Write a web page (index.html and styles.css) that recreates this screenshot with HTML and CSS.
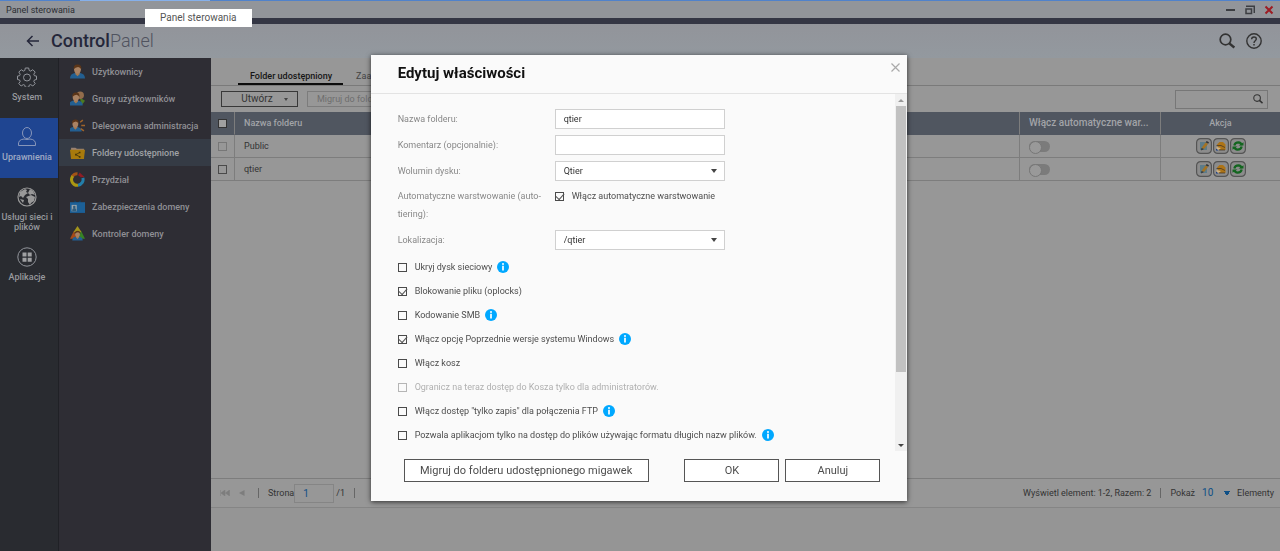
FILE: index.html
```html
<!DOCTYPE html>
<html lang="pl">
<head>
<meta charset="utf-8">
<title>Panel sterowania</title>
<link rel="stylesheet" href="styles.css">
</head>
<body>
<svg class="defs" aria-hidden="true">
  <symbol id="magnifier" viewBox="0 0 16 16"><circle cx="6.500" cy="6.500" r="5.300" fill="none" stroke="currentColor" stroke-width="1.700"/><path d="M10.300 10.300l5 4.300" stroke="currentColor" stroke-width="2.400"/></symbol>
  <symbol id="info" viewBox="0 0 12 12"><circle cx="6" cy="6" r="6" fill="#00a8ff"/><circle cx="6" cy="3" r="1" fill="#fff"/><path d="M6 4.800v4.700" stroke="#fff" stroke-width="1.700"/></symbol>
  <symbol id="person" viewBox="0 0 14 14"><path d="M0 13.500q0-4 4.500-5h5q4.500 1 4.500 5z" fill="#235f91"/><path d="M5 7h4v2.500l-2 2-2-2z" fill="#a47952"/><ellipse cx="7" cy="5" rx="3.200" ry="4" fill="#a98263"/><path d="M3.400 5Q3 .6 7 .5t3.600 4.500Q9.500 3 7.500 2.700 5 3 3.400 5z" fill="#5b3518"/></symbol>
  <symbol id="act-edit" viewBox="0 0 16 16"><rect x=".6" y=".6" width="14.800" height="14.800" rx="4" fill="#8c8c8c" stroke="#555" stroke-width="1.200"/><path d="M4 4h7v8H4z" fill="#5d7c89"/><path d="M5.500 10l4-5.500 2.500 1.500-4 5z" fill="#a47324"/><path d="M5.500 10l2.500 1-3 1.500zM9.700 4.200l1-1.200 2.300 1.300-.8 1.500z" fill="#333"/></symbol>
  <symbol id="act-perm" viewBox="0 0 16 16"><rect x=".6" y=".6" width="14.800" height="14.800" rx="4" fill="#8c8c8c" stroke="#555" stroke-width="1.200"/><path d="M4 6.500l2.500-2.500H10l2.500 2.500V12H6z" fill="#ad7417"/><path d="M3.500 7.500H8l4 2M6 12h6" stroke="#473826" stroke-width=".8" fill="none"/><path d="M3.500 9L8 10l-2 1.500H3.500z" fill="#d0b486"/><path d="M3 10.500l2.500 2H3z" fill="#193d85"/></symbol>
  <symbol id="act-sync" viewBox="0 0 16 16"><rect x=".6" y=".6" width="14.800" height="14.800" rx="4" fill="#8c8c8c" stroke="#555" stroke-width="1.200"/><path d="M4.300 7.500Q5 4.300 8.500 4.300q2.500.2 3.200 3M11.700 8.500Q11 11.700 7.500 11.700 5 11.500 4.300 9" fill="none" stroke="#13651f" stroke-width="2.200"/><path d="M8.500 7.500h5V4.200zM7.500 8.500h-5v3.300z" fill="#13651f"/></symbol>
</svg>
<div class="desktop">
  <header class="titlebar">
    <span>Panel sterowania</span>
    <div class="window-buttons">
      <button aria-label="Minimalizuj"><svg width="10" height="10"><path d="M0 5h9" stroke="#3c3e42" stroke-width="2"/></svg></button>
      <button aria-label="Przywróć"><svg width="10" height="10"><path d="M1 1.200h8.300V8" fill="none" stroke="#3c3e42" stroke-width="1.500"/><path d="M1 4h5.500v4.500H1z" fill="none" stroke="#3c3e42" stroke-width="1.500"/></svg></button>
      <button aria-label="Zamknij okno"><svg width="10" height="10"><path d="M1.500 1.500l7 7m0-7l-7 7" stroke="#9d1c23" stroke-width="2"/></svg></button>
    </div>
    <div class="tooltip" role="tooltip">Panel sterowania</div>
  </header>
  <div class="brandbar">
    <button class="back" aria-label="Wstecz"><svg width="14" height="12"><path d="M13 6H1.500M6.500 1l-5 5 5 5" fill="none" stroke="#25273a" stroke-width="1.500"/></svg></button>
    <h1><b>Control</b>Panel</h1>
    <button class="top-icon" aria-label="Szukaj"><svg width="16" height="16"><use href="#magnifier"/></svg></button>
    <button class="top-icon" aria-label="Pomoc"><svg width="16" height="16"><circle cx="8" cy="8" r="7.200" fill="none" stroke="#333" stroke-width="1.400"/><path d="M5.600 6.300Q5.700 4 8 4t2.300 2.100C10.300 7.800 8 7.800 8 10" fill="none" stroke="#333" stroke-width="1.400"/><path d="M8 11v1.600" stroke="#333" stroke-width="1.500"/></svg></button>
  </div>
  <div class="workspace">
    <nav class="rail" aria-label="Kategorie">
      <a href="#"><svg viewBox="0 0 20 20"><path d="M8.300 1h3.400l.5 2.500 1.500.6 2.100-1.400 2.400 2.400-1.400 2.100.6 1.500 2.100.4v3.400l-2.100.5-.6 1.500 1.400 2.100-2.400 2.400-2.100-1.400-1.500.6-.5 2.100H8.300l-.5-2.100-1.500-.6L4.200 19l-2.400-2.400 1.400-2.100-.6-1.500-2.100-.5V9.100l2.100-.4.600-1.500-1.400-2.100 2.400-2.400 2.100 1.400 1.500-.6z" fill="none" stroke="#92959b"/><circle cx="10" cy="10.500" r="3.500" fill="none" stroke="#92959b"/></svg>System</a>
      <a href="#" class="current"><svg viewBox="0 0 20 20"><ellipse cx="10" cy="6" rx="4.500" ry="5.500" fill="none" stroke="#8796ba"/><path d="M1.500 18.500q-.8-6 5.500-6.500 3 1 6 0 6.300.5 5.500 6.500z" fill="none" stroke="#8796ba"/></svg>Uprawnienia</a>
      <a href="#"><svg viewBox="0 0 20 20"><circle cx="10" cy="10" r="9" fill="none" stroke="#999" stroke-width="1.200"/><path d="M3 5l5-3 2 1-1 2 2 1-3 2-2 3-2-2-2 1zM13 2l3 2 2 4-3-1-2 1-2-2zM9 10l5-2 4 2-1 4-3 2-1 2-2-3v-3zM3 12l4 1-1 3z" fill="#999"/></svg>Usługi sieci i plików</a>
      <a href="#"><svg viewBox="0 0 20 20"><circle cx="10" cy="10" r="9.200" fill="none" stroke="#92959b"/><path d="M5.500 5.500h4v4h-4zm5.200 0h4v4h-4zm-5.200 5.200h4v4h-4zm5.200 0h4v4h-4z" fill="#a0a1a3"/></svg>Aplikacje</a>
    </nav>
    <nav class="submenu" aria-label="Uprawnienia">
      <a href="#"><svg viewBox="0 0 14 14"><use href="#person"/></svg>Użytkownicy</a>
      <a href="#"><svg viewBox="0 0 14 14"><path d="M9 6l5 3-3 4z" fill="#4b7b22"/><circle cx="9.500" cy="4" r="3.500" fill="#926c4b"/><use href="#person" x="-1" y="1" width="13" height="13"/></svg>Grupy użytkowników</a>
      <a href="#"><svg viewBox="0 0 14 14"><use href="#person" x="-1" y="1" width="12" height="12"/><path d="M9.500 4l2.500-2m-1.500 5H14m-4 3l3 2" stroke="#a0642a" stroke-width="1.400"/></svg>Delegowana administracja</a>
      <a href="#" class="current"><svg viewBox="0 0 14 14"><path d="M1 2.500h4l1.500 1H13v3H1z" fill="#998274"/><path d="M0 4.500h14L13 13H1z" fill="#a87a0c"/><path d="M9 7L5.500 9 9 11" fill="none" stroke="#493909" stroke-width=".8"/><path d="M8.300 6.200h1.500v1.500H8.300zM4.700 8.200h1.500v1.500H4.700zM8.300 10.300h1.500v1.500H8.300z" fill="#493909"/></svg>Foldery udostępnione</a>
      <a href="#"><svg viewBox="0 0 14 14"><path d="M2 4.500A5.300 5.300 0 0 1 7 1.700" fill="none" stroke="#a35416" stroke-width="2.800"/><path d="M2.600 3.800A5.300 5.300 0 0 0 7.500 12.300" fill="none" stroke="#aa9712" stroke-width="2.800"/><path d="M7.500 12.300A5.300 5.300 0 0 0 12 5.500" fill="none" stroke="#237eaa" stroke-width="2.800"/><path d="M9 .5l4.500 4.200L10 5 7.500 3z" fill="#8e1c25"/></svg>Przydział</a>
      <a href="#"><svg viewBox="0 0 14 14"><path d="M4 1l3 2.500L10 1v4H4z" fill="#153e5d"/><path d="M0 3h14v10H0z" fill="#1c6097"/><path d="M1.500 5.500h4.800v6H1.500z" fill="#9aa4aa"/><circle cx="4" cy="7.500" r="1.200" fill="#315e7d"/><path d="M2 11.500q0-3 2-3t2 3z" fill="#315e7d"/></svg>Zabezpieczenia domeny</a>
      <a href="#"><svg viewBox="0 0 14 14"><path d="M7 0l4 6H3z" fill="#a3941c"/><path d="M3.500 5L7 12H0z" fill="#a44a18"/><path d="M10.500 5l3.500 7H7z" fill="#378325"/><use href="#person" x="2" y="4" width="10" height="10"/></svg>Kontroler domeny</a>
    </nav>
    <main class="content">
      <div class="tabs" role="tablist">
        <button role="tab" class="selected" aria-selected="true">Folder udostępniony</button>
        <button role="tab" aria-selected="false">Zaaw.</button>
      </div>
      <div class="toolbar">
        <button class="create">Utwórz <i class="caret"></i></button>
        <button class="migrate" disabled>Migruj do folderu</button>
        <label class="search"><input type="search" aria-label="Szukaj folderu"><svg width="10" height="10"><use href="#magnifier"/></svg></label>
      </div>
      <table class="folders">
        <thead>
          <tr><th class="pick"><input type="checkbox" class="head-box" aria-label="Zaznacz wszystkie"></th><th>Nazwa folderu</th><th class="tier">Włącz automatyczne war...</th><th class="action">Akcja</th></tr>
        </thead>
        <tbody>
          <tr><td class="pick"><input type="checkbox" class="box" disabled aria-label="Public"></td><td>Public</td><td class="tier"><input type="checkbox" class="switch" aria-label="Warstwowanie Public"></td><td class="action"><div><button aria-label="Edytuj"><svg><use href="#act-edit"/></svg></button><button aria-label="Uprawnienia"><svg><use href="#act-perm"/></svg></button><button aria-label="Odśwież"><svg><use href="#act-sync"/></svg></button></div></td></tr>
          <tr><td class="pick"><input type="checkbox" class="box" aria-label="qtier"></td><td>qtier</td><td class="tier"><input type="checkbox" class="switch" aria-label="Warstwowanie qtier"></td><td class="action"><div><button aria-label="Edytuj"><svg><use href="#act-edit"/></svg></button><button aria-label="Uprawnienia"><svg><use href="#act-perm"/></svg></button><button aria-label="Odśwież"><svg><use href="#act-sync"/></svg></button></div></td></tr>
        </tbody>
      </table>
      <footer class="pager">
        <button aria-label="Pierwsza strona" disabled><svg width="10" height="6"><path d="M.5 0v6M5 0v6L1 3zM9.500 0v6L5.500 3z" fill="#7d7d7d" stroke="#7d7d7d" stroke-width=".5"/></svg></button>
        <button class="prev" aria-label="Poprzednia strona" disabled><svg width="6" height="6"><path d="M5.500 0v6L0 3z" fill="#7d7d7d"/></svg></button>
        <i class="divider"></i>
        <label class="page-label">Strona<input type="text" value="1"></label>
        <span>/1</span>
        <i class="divider"></i>
        <button class="next" aria-label="Następna strona" disabled><svg width="6" height="6"><path d="M.5 0v6L6 3z" fill="#7d7d7d"/></svg></button>
        <span class="total">Wyświetl element: 1-2, Razem: 2</span>
        <i class="divider"></i>
        <label class="page-size">Pokaż <select><option>10</option></select> Elementy</label>
      </footer>
      <div class="status"></div>
    </main>
  </div>
</div>

<div class="overlay">
  <form class="dialog" role="dialog" aria-labelledby="dialog-title">
    <header class="dialog-head">
      <h2 id="dialog-title">Edytuj właściwości</h2>
      <button type="button" class="close" aria-label="Zamknij"><svg width="9" height="9"><path d="M.5.5l8 8m0-8l-8 8" stroke="#aaa" stroke-width="1.200"/></svg></button>
    </header>
    <div class="dialog-body">
      <div class="form">
        <div class="row"><label for="name">Nazwa folderu:</label><input id="name" class="field" type="text" value="qtier"></div>
        <div class="row"><label for="comment">Komentarz (opcjonalnie):</label><input id="comment" class="field" type="text"></div>
        <div class="row"><label for="volume">Wolumin dysku:</label><div class="select"><select id="volume" class="field"><option>Qtier</option></select><i class="caret"></i></div></div>
        <div class="row tall"><span>Automatyczne warstwowanie (auto-tiering):</span><label class="check"><input type="checkbox" class="box" checked>Włącz automatyczne warstwowanie</label></div>
        <div class="row"><label for="location">Lokalizacja:</label><div class="select"><select id="location" class="field"><option>/qtier</option></select><i class="caret"></i></div></div>
        <div class="options">
          <div class="option"><label class="check"><input type="checkbox" class="box">Ukryj dysk sieciowy</label><svg class="info"><use href="#info"/></svg></div>
          <div class="option"><label class="check"><input type="checkbox" class="box" checked>Blokowanie pliku (oplocks)</label></div>
          <div class="option"><label class="check"><input type="checkbox" class="box">Kodowanie SMB</label><svg class="info"><use href="#info"/></svg></div>
          <div class="option"><label class="check"><input type="checkbox" class="box" checked>Włącz opcję Poprzednie wersje systemu Windows</label><svg class="info"><use href="#info"/></svg></div>
          <div class="option"><label class="check"><input type="checkbox" class="box">Włącz kosz</label></div>
          <div class="option"><label class="check off"><input type="checkbox" class="box" disabled>Ogranicz na teraz dostęp do Kosza tylko dla administratorów.</label></div>
          <div class="option"><label class="check"><input type="checkbox" class="box">Włącz dostęp "tylko zapis" dla połączenia FTP</label><svg class="info"><use href="#info"/></svg></div>
          <div class="option"><label class="check"><input type="checkbox" class="box">Pozwala aplikacjom tylko na dostęp do plików używając formatu długich nazw plików.</label><svg class="info"><use href="#info"/></svg></div>
        </div>
      </div>
      <div class="scrollbar" aria-hidden="true"><i class="arrow up"></i><div class="track"><div class="thumb"></div></div><i class="arrow down"></i></div>
    </div>
    <footer class="dialog-foot">
      <button type="button" class="wide">Migruj do folderu udostępnionego migawek</button>
      <button type="submit">OK</button>
      <button type="button">Anuluj</button>
    </footer>
  </form>
</div>
</body>
</html>
```

FILE: styles.css
```css
* { box-sizing: border-box; }
body { margin: 0; background: #979797; color: #333; font: 9px/12px Roboto, sans-serif; }
button, input, select { font: inherit; color: inherit; margin: 0; padding: 0; border: 0; border-radius: 0; background: none; appearance: none; }
button { display: inline-flex; align-items: center; justify-content: center; }
a { color: inherit; text-decoration: none; }
svg { display: block; flex: none; }
.defs { position: absolute; width: 0; height: 0; }
.caret { border: 3px solid transparent; border-top: 4px solid #444; border-bottom: 0; }

.desktop { display: flex; flex-direction: column; min-height: 100vh; }
.titlebar { position: relative; display: flex; align-items: center; justify-content: space-between; height: 24px; padding: 0 6px; border-top: 1px solid #5082cb; border-bottom: 6px solid #343644; background: #92959a; color: #2c2e33; }
.titlebar::before { content: ""; position: absolute; top: -1px; left: 80px; width: 130px; height: 1px; background: #86b0ea; }
.window-buttons { display: flex; gap: 9px; }
.tooltip { position: absolute; left: 145px; top: 8px; padding: 3px 15px; background: #fff; color: #555; font-size: 10px; }
.brandbar { display: flex; align-items: center; gap: 11px; height: 34px; padding: 0 18px 0 26px; background: linear-gradient(#92949a, #93999f); color: #333; }
.brandbar h1 { flex: 1; margin: 0; font-size: 18px; line-height: 24px; font-weight: 300; color: #50535f; }
.brandbar b { font-weight: 500; color: #25273a; }
.workspace { display: flex; flex: 1; }

.rail { display: flex; flex-direction: column; width: 59px; background: #292b30; color: #97999d; border-right: 1px solid #202126; }
.rail a { display: flex; flex-direction: column; align-items: center; gap: 5px; height: 60px; padding: 9px 4px 0 0; line-height: 10px; font-weight: 500; text-align: center; }
.rail svg { width: 20px; height: 20px; }
.rail .current { background: #1f4591; color: #9faac4; }
.submenu { width: 152px; background: #2e2d34; color: #909095; font-weight: 500; }
.submenu a { display: flex; align-items: center; gap: 7px; height: 27px; padding-left: 11px; white-space: nowrap; }
.submenu svg { width: 15px; height: 15px; }
.submenu .current { background: #353b45; color: #a0a2a6; }

.content { display: flex; flex-direction: column; flex: 1; min-width: 0; }
.tabs { display: flex; gap: 1px; height: 28px; padding-left: 27px; border-bottom: 1px solid #7a7a7a; }
.tabs button { padding: 11px 11px 0 12px; white-space: nowrap; color: #444; border-bottom: 2px solid transparent; }
.tabs .selected { font-weight: 500; color: #161616; border-color: #0c0c0c; }
.toolbar { display: flex; align-items: center; gap: 9px; height: 26px; padding: 0 12px 0 10px; }
.create { gap: 11px; width: 77px; height: 16px; padding-left: 10px; border: 1px solid #383838; font-size: 10px; }
.create .caret { border-width: 3px 2px 0; }
.migrate { height: 16px; padding: 0 9px; border: 1px solid #7c7c7c; color: #6e6e6e; }
.search { display: flex; align-items: center; width: 93px; height: 19px; margin-left: auto; padding-right: 4px; border: 1px solid #777; }
.search input { flex: 1; min-width: 0; }
.folders { width: 100%; table-layout: fixed; border-collapse: separate; border-spacing: 0; }
.folders th, .folders td { height: 23px; padding: 0 9px; text-align: left; border-right: 1px solid #7d7d7d; border-bottom: 1px solid #7d7d7d; }
.folders th { background: #505660; color: #a2a4a8; font-weight: 500; border-bottom-color: #505660; }
.folders th:last-child, .folders td:last-child { border-right: 0; }
.folders .pick { width: 24px; padding: 0 7px; }
.folders .tier { width: 141px; white-space: nowrap; }
.folders th.tier { font-size: 10px; }
.folders .action { width: 119px; text-align: center; }
.action div { display: flex; justify-content: center; gap: 1px; }
.action svg { width: 16px; height: 16px; }
.head-box { display: block; width: 9px; height: 9px; background: #a0a0a0; border: 1px solid #333; }
.switch { display: block; width: 21px; height: 11px; border-radius: 6px; background: #7b7b7b; }
.switch::before { content: ""; display: block; width: 11px; height: 11px; border: 1px solid #777; border-radius: 50%; background: #999; }
.pager { display: flex; align-items: center; gap: 9px; height: 30px; margin-top: auto; padding: 0 6px 0 9px; border-top: 1px solid #7d7d7d; border-bottom: 1px solid #858585; white-space: nowrap; }
.prev { margin-right: 4px; }
.next { margin-left: 7px; }
.divider { width: 1px; height: 10px; background: #666; }
.page-label { display: flex; align-items: center; margin-right: -7px; }
.page-label input { width: 40px; height: 19px; padding-left: 8px; border: 1px solid #858585; color: #0e4f86; font-size: 10px; }
.pager .total { margin-left: auto; }
.page-size { display: flex; align-items: center; gap: 7px; }
.page-size select { width: 28px; color: #0e4f86; font-size: 10px; background: conic-gradient(from -32deg at 50% 100%, #0e4f86 64deg, transparent 0) 100% 50% / 6px 5px no-repeat; }
.status { height: 43px; background: #959595; }

.overlay { position: fixed; inset: 0; display: flex; align-items: flex-start; justify-content: center; padding: 10vh 2px 0 0; }
.dialog { display: flex; flex-direction: column; width: 42%; min-width: 536px; background: #fafafa; box-shadow: 0 1px 5px rgba(0, 0, 0, .7); color: #4d4d4d; }
.dialog-head { display: flex; align-items: flex-start; justify-content: space-between; padding: 8px 7px 10px 27px; border-bottom: 1px solid #e3e3e3; }
.dialog-head h2 { margin: 0; font-size: 15px; line-height: 20px; font-weight: 700; color: #111; }
.dialog-body { display: flex; }
.form { flex: 1; padding: 12px 0 4px 27px; }
.row { display: grid; grid-template-columns: 157px 170px; align-items: center; min-height: 26px; color: #888; }
.row.tall { align-items: start; padding: 3px 0 4px; line-height: 18px; }
.field { display: block; width: 100%; height: 20px; padding: 0 8px; border: 1px solid #d0d0d0; background: #fff; color: #333; }
.select { position: relative; }
.select .caret { position: absolute; right: 8px; top: 8px; pointer-events: none; }
.check { display: inline-flex; align-items: center; gap: 8px; color: #4d4d4d; white-space: nowrap; }
.check.off { color: #b0b0b0; }
.box { flex: none; display: block; width: 9px; height: 9px; border: 1px solid #4a4a4a; }
.box:disabled { border-color: #777; }
.off .box { border-color: #b5b5b5; }
.box:checked::before { content: ""; display: block; width: 7px; height: 4px; border: solid #555; border-width: 0 0 1px 1px; transform: rotate(-48deg); }
.options { padding-top: 2px; }
.option { display: flex; align-items: center; gap: 5px; height: 24px; }
.info { width: 12px; height: 12px; }
.scrollbar { display: flex; flex-direction: column; align-items: center; width: 12px; background: #f0f0f0; }
.track { flex: 1; width: 10px; }
.thumb { height: 80%; background: #c1c1c1; }
.arrow { margin: 5px 0 4px; border: 3px solid transparent; }
.arrow.up { border-top: 0; border-bottom-color: #999; }
.arrow.down { border-bottom: 0; border-top-color: #444; }
.dialog-foot { display: flex; gap: 6px; padding: 8px 27px 19px 33px; }
.dialog-foot button { width: 95px; height: 23px; border: 1px solid #555; background: #fff; font-size: 11px; }
.dialog-foot .wide { width: 245px; margin-right: auto; }
```
